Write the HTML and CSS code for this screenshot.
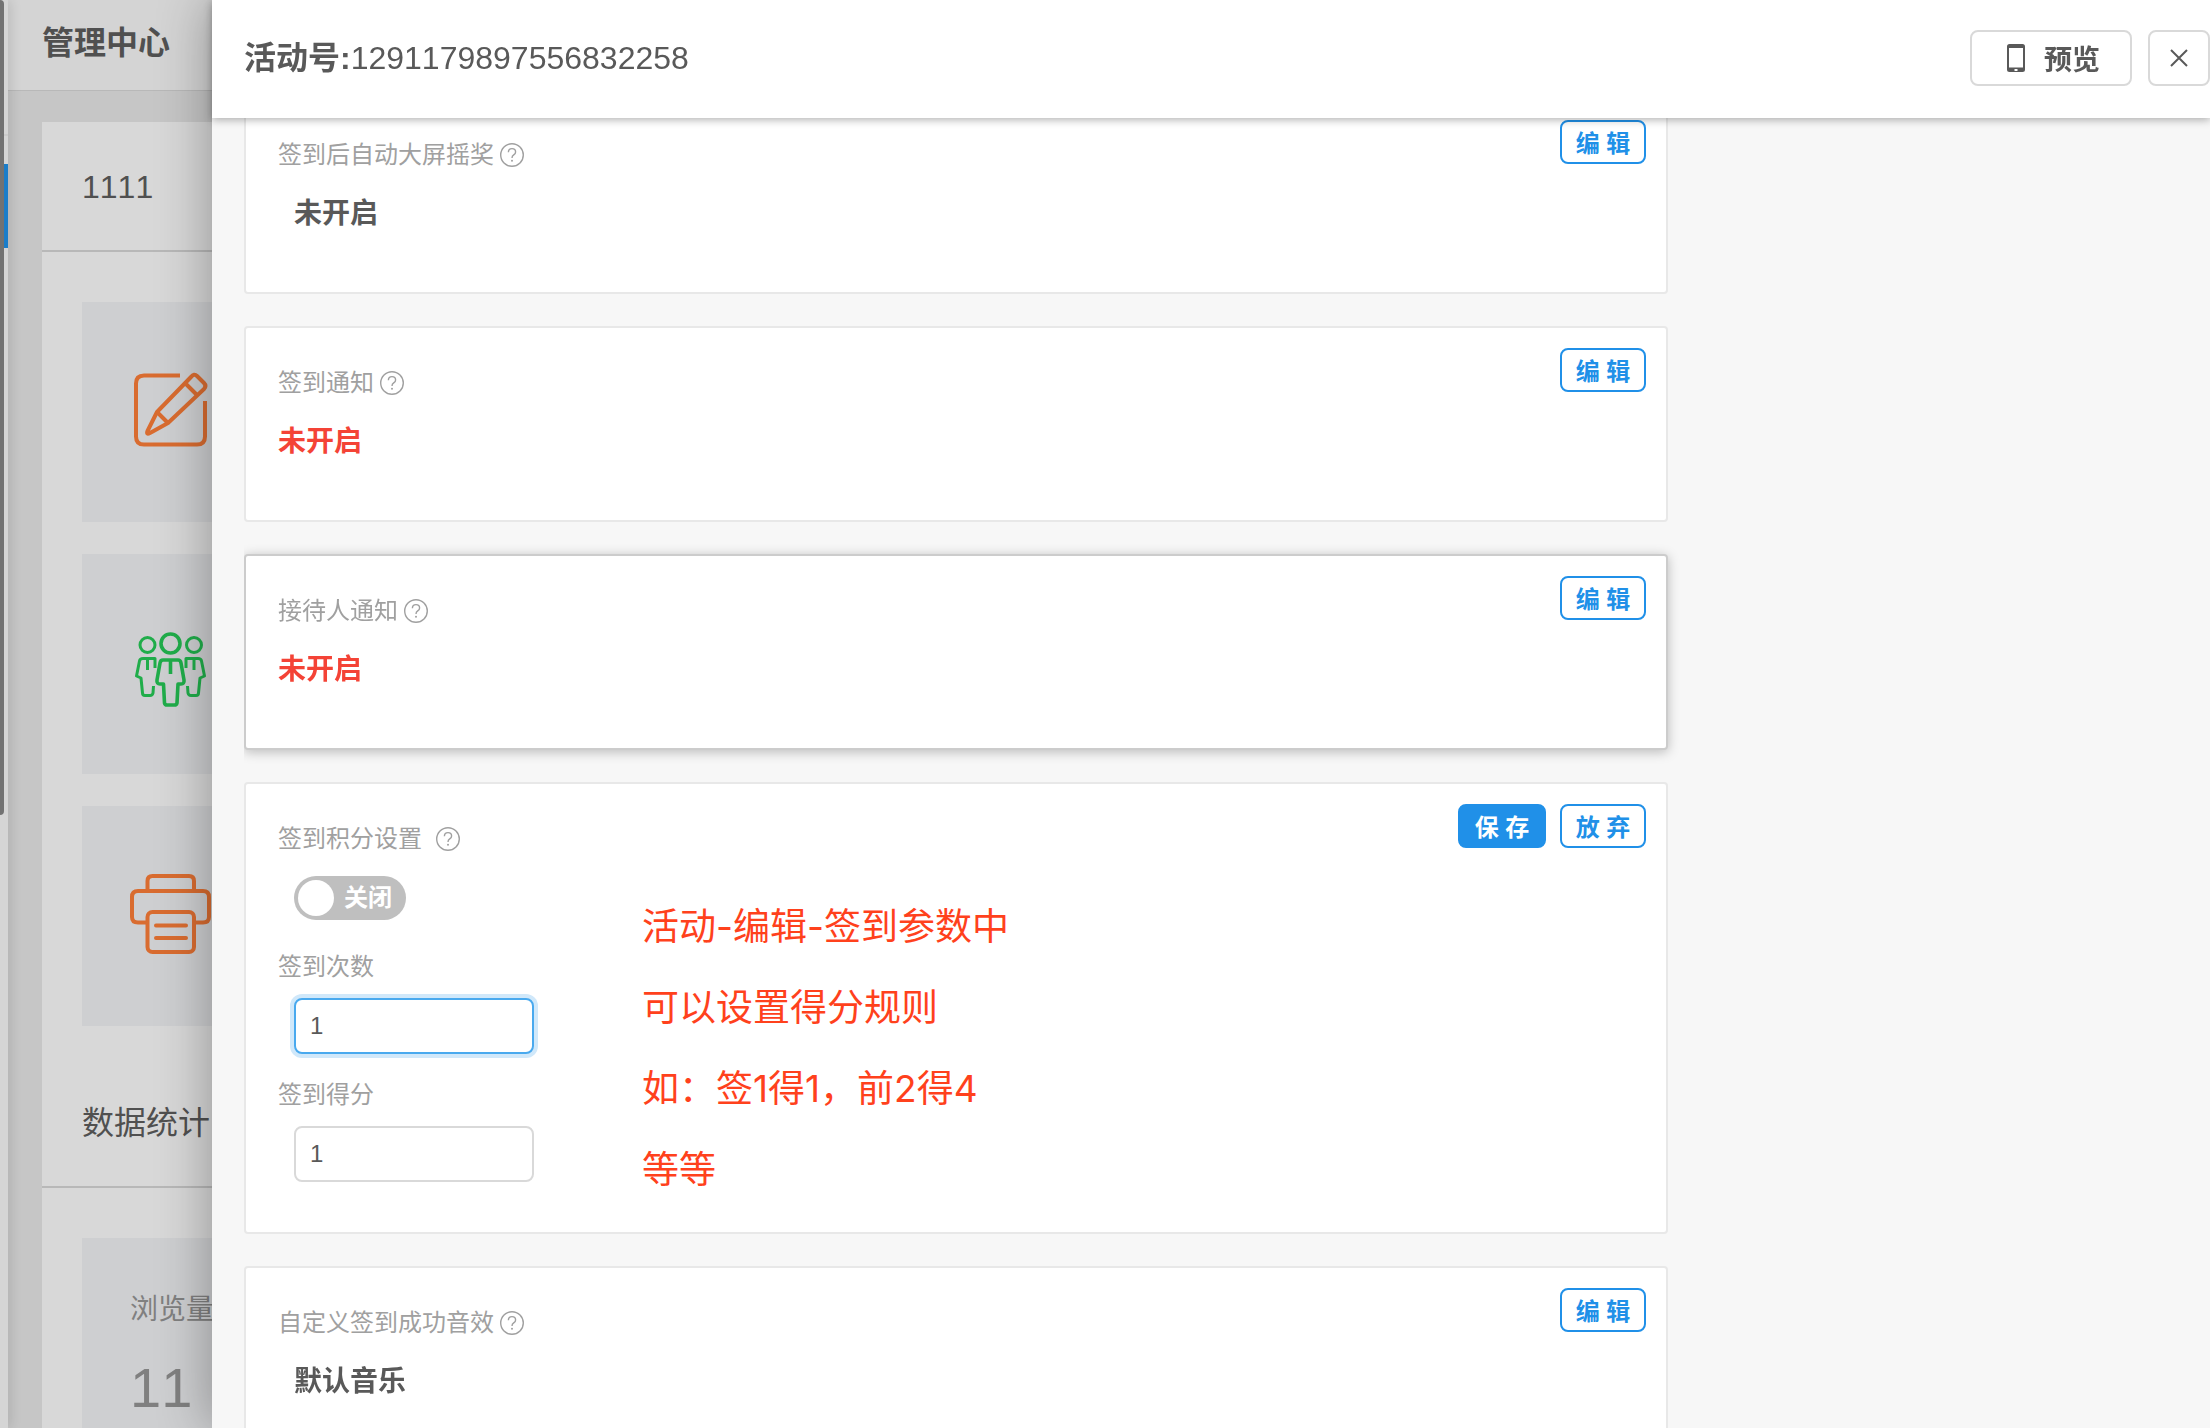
FILE: index.html
```
<!DOCTYPE html>
<html lang="zh-CN">
<head>
    <meta charset="UTF-8">
    <meta name="viewport" content="width=device-width, initial-scale=1.0">
    <title>管理中心</title>
    <link rel="stylesheet" href="styles.css">
</head>
<body>
    <svg class="sprite" aria-hidden="true">
        <symbol id="icon-help" viewBox="0 0 24 24">
            <circle cx="12" cy="12" r="11.3" fill="none" stroke="currentColor" stroke-width="1.4"/>
            <path d="M8.4 9.3c0-2.2 1.6-3.7 3.6-3.7s3.6 1.4 3.6 3.3c0 1.6-.9 2.3-1.9 3-1.1.8-1.7 1.4-1.7 3" fill="none" stroke="currentColor" stroke-width="1.4"/>
            <circle cx="12" cy="17.8" r="1" fill="currentColor"/>
        </symbol>
    </svg>

    <!-- page under the drawer -->
    <div class="page">
        <aside class="sidebar">
            <div class="scroll-thumb"></div>
            <div class="menu">
                <div class="menu-top"></div>
                <div class="menu-active"></div>
            </div>
        </aside>
        <main class="main">
            <header class="page-header">管理中心</header>
            <section class="panel">
                <h2 class="panel-title">1111</h2>
                <div class="tiles">
                    <div class="tile">
                        <svg class="tile-icon orange" viewBox="0 0 80 80" stroke-width="4">
                            <path d="M50 3.500H14Q6 3.500 6 11.500V64.500Q6 72.500 14 72.500H67Q75 72.500 75 64.500V29"/>
                            <path d="M27 40 61 5Q64 1 67 4L74 11Q77 14 74 17L38 51 20 61Q16 63 17.500 59Z" stroke-linejoin="round"/>
                            <path d="M55 11 68 24M27 40 38 51"/>
                        </svg>
                    </div>
                    <div class="tile">
                        <svg class="tile-icon green" viewBox="0 0 80 80" stroke-width="3" stroke-linejoin="round">
                            <circle cx="17.500" cy="21" r="7.500"/>
                            <circle cx="64" cy="21" r="7.500"/>
                            <circle cx="40.500" cy="19.500" r="9.500" stroke-width="3.600"/>
                            <path d="M25 44V34.500H13Q10 34.500 9.500 37L6.500 52 11 54 12.500 69Q12.500 71.500 15 71.500H20Q22.500 71.500 23 69L23.500 62M17.500 34.500V46"/>
                            <path d="M56 44V34.500H68Q71 34.500 71.500 37L74.500 52 70 54 68.500 69Q68.500 71.500 66 71.500H61Q58.500 71.500 58 69L57.500 62M64 34.500V46"/>
                            <path d="M33 36H48Q50.500 36 51 39L54 56Q54.500 60 51 60H48L47 79Q46.500 81 44.500 81H37Q35 81 34.500 79L33.500 60H30Q26.500 60 27 56L30 39Q30.500 36 33 36ZM40.500 36V50" stroke-width="3.600"/>
                        </svg>
                    </div>
                    <div class="tile">
                        <svg class="tile-icon orange" viewBox="0 0 80 80" stroke-width="4">
                            <path d="M17.500 14V5Q17.500 0 22.500 0H59Q64 0 64 5V14"/>
                            <path d="M17.500 46.500H8Q2 46.500 2 41V21Q2 15 8 15H73Q79 15 79 21V41Q79 46.500 73 46.500H64"/>
                            <rect x="17.500" y="36" width="46.500" height="40" rx="5"/>
                            <path d="M26 49.500H56M26 62H56" stroke-linecap="round"/>
                        </svg>
                    </div>
                </div>
                <h2 class="panel-title">数据统计</h2>
                <div class="tiles">
                    <div class="tile stat">
                        <div class="stat-name">浏览量</div>
                        <div class="stat-value">11</div>
                    </div>
                </div>
            </section>
        </main>
    </div>

    <!-- drawer -->
    <div class="drawer">
        <header class="drawer-header">
            <h1 class="drawer-title"><b>活动号:</b>1291179897556832258</h1>
            <button type="button" class="btn btn-preview">
                <svg class="phone-icon" viewBox="0 0 28 28">
                    <path fill-rule="evenodd" d="M7.500 0H20.500Q23 0 23 2.500V25.500Q23 28 20.500 28H7.500Q5 28 5 25.500V2.500Q5 0 7.500 0ZM7 4V23.500H21V4ZM12.500 25H15.500V27H12.500Z" fill="currentColor"/>
                </svg>
                预览
            </button>
            <button type="button" class="btn btn-close" aria-label="关闭">
                <svg class="close-icon" viewBox="0 0 18 18"><path d="M1 1 17 17M17 1 1 17" stroke="currentColor" stroke-width="2"/></svg>
            </button>
        </header>

        <div class="drawer-body">
            <section class="card">
                <div class="actions"><button type="button" class="btn btn-small">编 辑</button></div>
                <div class="field">
                    <div class="label">签到后自动大屏摇奖<svg class="help"><use href="#icon-help"/></svg></div>
                    <div class="value indent">未开启</div>
                </div>
            </section>

            <section class="card">
                <div class="actions"><button type="button" class="btn btn-small">编 辑</button></div>
                <div class="field">
                    <div class="label">签到通知<svg class="help"><use href="#icon-help"/></svg></div>
                    <div class="value off">未开启</div>
                </div>
            </section>

            <section class="card active">
                <div class="actions"><button type="button" class="btn btn-small">编 辑</button></div>
                <div class="field">
                    <div class="label">接待人通知<svg class="help"><use href="#icon-help"/></svg></div>
                    <div class="value off">未开启</div>
                </div>
            </section>

            <section class="card with-note">
                <div class="actions">
                    <button type="button" class="btn btn-small btn-primary">保 存</button>
                    <button type="button" class="btn btn-small">放 弃</button>
                </div>
                <form class="form">
                    <div class="field">
                        <label class="label" for="scoreSwitch">签到积分设置 <svg class="help"><use href="#icon-help"/></svg></label>
                        <div class="control">
                            <label class="switch">
                                <input type="checkbox" id="scoreSwitch" class="switch-input">
                                <span class="knob"></span>
                                关闭
                            </label>
                        </div>
                    </div>
                    <div class="field">
                        <label class="label" for="signCount">签到次数</label>
                        <div class="control"><input type="text" id="signCount" class="input focused" value="1"></div>
                    </div>
                    <div class="field">
                        <label class="label" for="signScore">签到得分</label>
                        <div class="control"><input type="text" id="signScore" class="input" value="1"></div>
                    </div>
                </form>
                <p class="note">活动-编辑-签到参数中<br>可以设置得分规则<br>如：签1得1，前2得4<br>等等</p>
            </section>

            <section class="card">
                <div class="actions"><button type="button" class="btn btn-small">编 辑</button></div>
                <div class="field">
                    <div class="label">自定义签到成功音效<svg class="help"><use href="#icon-help"/></svg></div>
                    <div class="value indent">默认音乐</div>
                </div>
            </section>
        </div>
    </div>
</body>
</html>
```
FILE: styles.css
```
* {
    box-sizing: border-box;
}
body {
    margin: 0;
    height: 100vh;
    overflow: hidden;
    font-family: "Liberation Sans", "Noto Sans CJK SC", sans-serif;
    font-size: 24px;
    font-kerning: none;
    color: #595959;
}
h1, h2, p {
    margin: 0;
}
button, input {
    font-family: inherit;
    color: inherit;
}
.sprite {
    position: absolute;
    width: 0;
    height: 0;
}

/* page */
.page {
    display: flex;
    height: 100vh;
    overflow: hidden;
    background: #c6c6c6;
    color: #505050;
}
.sidebar {
    display: flex;
    width: 8px;
    background: #d5d5d5;
    box-shadow: 2px 0 12px rgba(0, 0, 0, 0.15);
    z-index: 1;
}
.scroll-thumb {
    width: 4px;
    height: 815px;
    background: #727272;
    border-radius: 0 4px 4px 0;
}
.menu {
    flex: 1;
}
.menu-top {
    height: 136px;
    margin-bottom: 28px;
    border-bottom: 2px solid #cbcbcb;
}
.menu-active {
    height: 84px;
    background: #1b7dc9;
}
.main {
    flex: 1;
}
.page-header {
    height: 91px;
    padding-left: 34px;
    border-bottom: 1px solid #b8b8b8;
    background: #d4d4d4;
    font-size: 32px;
    font-weight: bold;
    line-height: 86px;
}
.panel {
    margin: 31px 0 0 34px;
    background: #d8d8d8;
}
.panel-title {
    height: 130px;
    padding-left: 40px;
    border-bottom: 2px solid #b8b8b8;
    font-size: 32px;
    font-weight: normal;
    line-height: 130px;
}
.tiles {
    display: flex;
    flex-direction: column;
    gap: 32px;
    padding: 50px 0 32px 40px;
}
.tile {
    display: flex;
    align-items: center;
    height: 220px;
    padding-left: 48px;
    background: #cecfd1;
}
.tile-icon {
    width: 80px;
    height: 80px;
    overflow: visible;
    fill: none;
}
.orange {
    stroke: #d96c30;
}
.green {
    stroke: #20ad4a;
}
.stat {
    flex-direction: column;
    align-items: flex-start;
    justify-content: flex-start;
    padding-top: 50px;
    color: #808080;
}
.stat-name {
    font-size: 28px;
    line-height: 44px;
}
.stat-value {
    font-size: 56px;
    line-height: 112px;
}

/* drawer */
.drawer {
    position: fixed;
    top: 0;
    right: 0;
    bottom: 0;
    left: 212px;
    display: flex;
    flex-direction: column;
    background: #f7f7f7;
    box-shadow: -4px 0 48px rgba(0, 0, 0, 0.3);
}
.drawer-header {
    display: flex;
    align-items: center;
    gap: 16px;
    height: 118px;
    padding: 0 0 2px 32px;
    background: #fff;
    box-shadow: 0 2px 8px rgba(0, 0, 0, 0.3);
    z-index: 1;
}
.drawer-title {
    flex: 1;
    padding-bottom: 6px;
    font-size: 32px;
    font-weight: normal;
}
.btn {
    display: flex;
    align-items: center;
    justify-content: center;
    border: 2px solid #d9d9d9;
    border-radius: 8px;
    background: #fff;
    font-weight: bold;
    cursor: pointer;
}
.btn-preview {
    gap: 14px;
    height: 56px;
    padding: 0 30px;
    font-size: 28px;
}
.phone-icon {
    width: 28px;
    height: 28px;
}
.btn-close {
    width: 62px;
    height: 56px;
    padding: 0;
}
.close-icon {
    width: 18px;
    height: 18px;
}
.btn-small {
    width: 86px;
    height: 44px;
    padding: 0 0 2px;
    border-color: #2090e8;
    font-size: 24px;
    color: #2090e8;
}
.btn-primary {
    width: 88px;
    background: #2090e8;
    color: #fff;
}
.drawer-body {
    flex: 1;
    margin-left: 32px;
    overflow: hidden;
}

/* cards, the first one is partly scrolled under the header */
.card {
    position: relative;
    max-width: 1424px;
    margin-bottom: 32px;
    padding: 32px;
    border: 2px solid #e8e8e8;
    border-radius: 4px;
    background: #fff;
}
.card:first-child {
    margin-top: -20px;
}
.active {
    border-color: #ccc;
    box-shadow: 0 2px 12px rgba(0, 0, 0, 0.25);
}
.actions {
    position: absolute;
    top: 20px;
    right: 20px;
    display: flex;
    gap: 14px;
}
.field {
    height: 128px;
}
.label {
    display: flex;
    align-items: center;
    gap: 6px;
    height: 46px;
    line-height: 48px;
    color: #a0a0a0;
}
.help {
    width: 24px;
    height: 24px;
}
.form .help {
    margin-left: 8px;
}
.value {
    margin-top: 8px;
    font-size: 28px;
    font-weight: bold;
    line-height: 56px;
}
.indent {
    padding-left: 16px;
}
.off {
    color: #f44336;
}
.control {
    display: flex;
    align-items: center;
    height: 56px;
    margin: 8px 0 0 16px;
}
.switch {
    display: flex;
    align-items: center;
    gap: 10px;
    width: 112px;
    height: 44px;
    padding: 4px;
    border-radius: 22px;
    background: #bfbfbf;
    font-weight: bold;
    line-height: 34px;
    color: #fff;
    cursor: pointer;
}
.switch-input {
    position: absolute;
    opacity: 0;
}
.knob {
    width: 36px;
    height: 36px;
    border-radius: 50%;
    background: #fff;
}
.input {
    width: 240px;
    height: 56px;
    padding: 0 14px;
    border: 2px solid #d9d9d9;
    border-radius: 8px;
    outline: none;
    font-size: 24px;
}
.focused {
    border-color: #49a9ee;
    box-shadow: 0 0 0 4px #d0e8fa;
}
.with-note {
    display: flex;
    gap: 108px;
}
.note {
    height: 384px;
    padding-top: 70px;
    font-family: Inter, "Noto Sans CJK SC", sans-serif;
    font-size: 37px;
    line-height: 81px;
    color: #ff411c;
}
```
